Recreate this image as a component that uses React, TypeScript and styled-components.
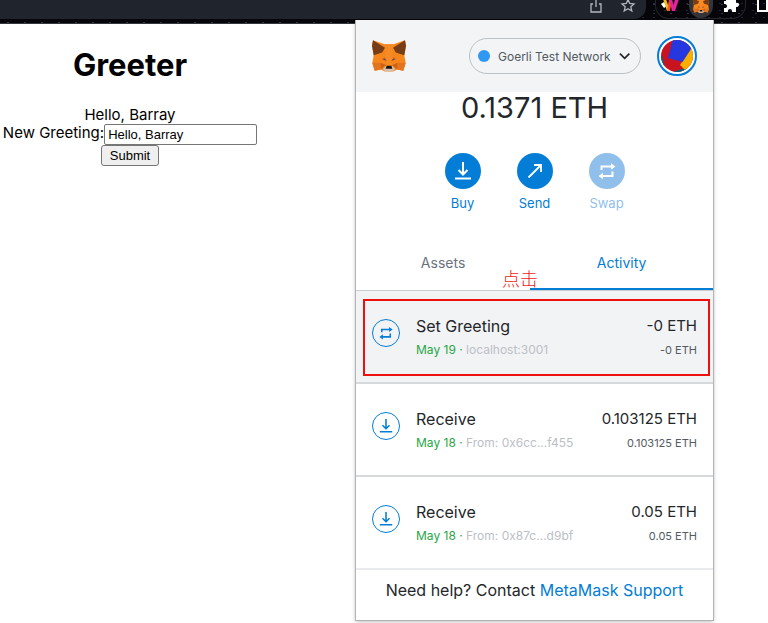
import React from "react";
import styled, { createGlobalStyle } from "styled-components";

const GlobalStyle = createGlobalStyle`
  *, *::before, *::after { box-sizing: border-box; }
  body {
    margin: 0;
    background: #fff;
    color: #000;
    font-family: Inter, "Liberation Sans", sans-serif;
  }
  button, input { font-family: inherit; margin: 0; }
`;

const blue = "#037dd6";

const Page = styled.div`
  position: relative;
  min-height: 100vh;
`;

const BrowserBar = styled.header`
  display: flex;
  height: 24px;
  overflow: hidden;
  background: #05050a;
  background-image: radial-gradient(#34344a 1px, transparent 1px), radial-gradient(#23233a 1px, transparent 1px);
  background-size: 17px 9px, 11px 7px;
  border-bottom: 1px solid #34363c;
`;

const AddressBar = styled.div`
  display: flex;
  flex: 1;
  justify-content: flex-end;
  gap: 16px;
  height: 19px;
  padding-right: 10px;
  background: #20242d;
  border-bottom-right-radius: 12px;
`;

const BarButton = styled.button`
  display: block;
  width: 16px;
  height: 16px;
  padding: 0;
  border: 0;
  background: none;
  color: #b4b7bd;
`;

const Extensions = styled.div`
  display: flex;
  align-items: flex-end;
  justify-content: space-between;
  width: 91px;
  height: 19px;
  margin: 0 11px 0 9px;
  padding: 0 2px;
  border: 1px solid #25252c;
  border-top: 0;
  border-radius: 0 0 14px 14px;
`;

const ExtensionButton = styled.button<{ $active?: boolean }>`
  display: flex;
  align-items: flex-end;
  justify-content: center;
  width: 24px;
  height: 18px;
  padding: 0 0 5px;
  border: 0;
  border-radius: 0 0 12px 12px;
  background: ${(p) => (p.$active ? "#333338" : "none")};
`;

const SidePanelMark = styled.span`
  width: 11px;
  height: 12px;
  border: 2px solid #fff;
  border-top: 0;
`;

const Greeter = styled.main`
  display: flex;
  flex-direction: column;
  align-items: center;
  width: 260px;
  padding-top: 22px;
  font-size: 15px;
  line-height: 18px;
`;

const Title = styled.h1`
  margin: 0 0 22px;
  font-size: 31px;
  line-height: 38px;
`;

const GreetingForm = styled.form`
  display: flex;
  flex-direction: column;
  align-items: center;
`;

const Field = styled.div`
  display: flex;
  height: 20px;
  white-space: nowrap;
`;

const GreetingInput = styled.input`
  width: 153px;
  height: 21px;
  padding: 0 3px;
  border: 1px solid #767676;
  border-radius: 2px;
  font-family: "Liberation Sans", Arial, sans-serif;
  font-size: 13px;
`;

const Submit = styled.button`
  width: 58px;
  height: 21px;
  margin-top: 1px;
  padding: 0;
  border: 1px solid #767676;
  border-radius: 3px;
  background: #efefef;
  font-family: "Liberation Sans", Arial, sans-serif;
  font-size: 13px;
`;

const Popup = styled.section`
  position: absolute;
  top: 20px;
  right: 55px;
  width: 357px;
  padding-bottom: 18px;
  background: #fff;
  color: #24272a;
  box-shadow: 0 0 0 1px #b4b4b4, 0 1px 4px rgba(0, 0, 0, 0.4);
  clip-path: inset(0 -8px -8px -8px);
`;

const PopupHeader = styled.div`
  display: flex;
  align-items: center;
  height: 72px;
  padding: 0 16px;
  background: #f2f4f6;
`;

const NetworkButton = styled.button`
  display: flex;
  align-items: center;
  gap: 8px;
  width: 172px;
  height: 36px;
  margin: 0 16px 0 auto;
  padding: 0 10px 0 8px;
  border: 1px solid #bbc0c5;
  border-radius: 18px;
  background: none;
  color: #535a61;
  font-size: 12px;
  white-space: nowrap;

  svg { margin-left: auto; }
`;

const Dot = styled.span`
  flex: none;
  width: 12px;
  height: 12px;
  border-radius: 50%;
  background: #3098f3;
`;

const AccountButton = styled.button`
  display: block;
  width: 40px;
  height: 40px;
  padding: 2px;
  border: 2px solid ${blue};
  border-radius: 50%;
  background: #fff;

  svg { display: block; border-radius: 50%; }
`;

const Balance = styled.div`
  margin: -4px 0 25px;
  font-size: 29px;
  line-height: 40px;
  text-align: center;
`;

const Actions = styled.div`
  display: flex;
  justify-content: center;
  gap: 24px;
`;

const Action = styled.button`
  display: flex;
  flex-direction: column;
  align-items: center;
  gap: 6px;
  width: 48px;
  padding: 0;
  border: 0;
  background: none;
  color: ${blue};
  font-size: 13px;
  line-height: 16px;

  &:disabled { color: #91bfec; }
`;

const ActionDisc = styled.span`
  display: flex;
  align-items: center;
  justify-content: center;
  width: 36px;
  height: 36px;
  border-radius: 50%;
  background: currentColor;

  svg { color: #fff; }
`;

const Tabs = styled.div`
  display: flex;
  height: 54px;
  margin-top: 26px;
  border-bottom: 1px solid #c9cdd1;
`;

const Tab = styled.button<{ $active?: boolean }>`
  flex: ${(p) => (p.$active ? 21 : 20)} 1 0;
  padding: 0;
  border: 0;
  border-bottom: 2px solid ${(p) => (p.$active ? blue : "transparent")};
  background: none;
  color: ${(p) => (p.$active ? blue : "#6a737d")};
  font-size: 14px;
`;

const ActivityList = styled.ul`
  margin: 0;
  padding: 0;
  list-style: none;
`;

const ActivityRow = styled.li<{ $selected?: boolean }>`
  position: relative;
  display: flex;
  gap: 16px;
  height: 93px;
  padding: 23px 16px 0;
  border-bottom: 2px solid #d6d9dc;
  background: ${(p) => (p.$selected ? "#f2f3f5" : "#fff")};

  &:last-child { border-color: #e8eaed; }
`;

const RowIcon = styled.span`
  display: flex;
  align-items: center;
  justify-content: center;
  width: 28px;
  height: 28px;
  margin-top: 5px;
  border: 1px solid ${blue};
  border-radius: 50%;
  color: ${blue};
`;

const RowText = styled.div`
  flex: 1;
  white-space: nowrap;
`;

const RowTitle = styled.div`
  font-size: 16px;
  line-height: 24px;
`;

const RowDetail = styled.div`
  font-size: 12px;
  line-height: 24px;
  color: #535a61;
`;

const AmountColumn = styled(RowText)`
  flex: none;
  text-align: right;

  ${RowTitle} { font-size: 15px; }
  ${RowDetail} { font-size: 11px; }
`;

const DateText = styled.span`
  color: #28a745;
`;

const Origin = styled.span`
  color: #bbc0c5;
`;

const Highlight = styled.div`
  position: absolute;
  inset: 8px 3px 6px 7px;
  border: 2px solid #ee1010;
  pointer-events: none;
`;

const ClickNote = styled.span`
  position: absolute;
  top: -26px;
  left: 146px;
  color: #ee1c1c;
  font-family: "Noto Sans CJK SC", sans-serif;
  font-weight: 300;
  font-size: 18px;
  line-height: 26px;
`;

const Help = styled.p`
  margin: 0;
  padding-top: 9px;
  font-size: 16px;
  line-height: 23px;
  text-align: center;
  white-space: nowrap;
`;

const HelpLink = styled.a`
  color: ${blue};
  text-decoration: none;
`;

const Fox = ({ width = 34, height = 32 }: { width?: number; height?: number }) => (
  <svg width={width} height={height} viewBox="0 0 100 93" aria-hidden="true">
    <path fill="#f6851b" d="M3 0 37 12H63L97 0l3 16-5 28 4 24-7 22-18-4-12 6H38l-12-6-18 4L1 68l4-24L0 16z" />
    <path fill="#763d16" d="M3 0 38 22 30 36 5 44 0 16zM97 0 62 22 70 36 95 44 100 16z" />
    <path fill="#f68a25" d="M38 12H62L60 48 56 76H44L40 48z" />
    <path fill="#e4751f" d="M1 66H25L26 86 8 90zM99 66H75L74 86 92 90z" />
    <path fill="#cd6116" d="M25 66 41 73 26 86zM75 66 59 73 74 86z" />
    <path fill="#d7c1b3" d="M32 85 41 76H59L68 85 60 92H40z" />
    <path fill="#c86528" d="M29 56 36 50 44 62zM71 56 64 50 56 62z" />
    <path fill="#5b4965" d="M33 57 38 54 41 60zM67 57 62 54 59 60z" />
    <path fill="#161616" d="M43 75H57L60 84H40z" />
  </svg>
);

const ShareIcon = () => (
  <svg width="16" height="16" viewBox="0 0 16 16" fill="none" stroke="currentColor" strokeWidth="1.3" aria-hidden="true">
    <path d="M5 4H3v8h10V4h-2M8 7V-2" />
  </svg>
);

const StarIcon = () => (
  <svg width="16" height="16" viewBox="0 0 16 16" fill="none" stroke="currentColor" strokeWidth="1.3" aria-hidden="true">
    <path d="M8-.5 9.7 3.5 14 3.9 10.8 6.8 11.8 11 8 8.7 4.2 11 5.2 6.8 2 3.9 6.3 3.5z" />
  </svg>
);

const WIcon = () => (
  <svg width="18" height="14" viewBox="0 0 18 14" aria-hidden="true">
    <path fill="#fff" d="M0 5l3-2 3 4-3 2z" />
    <path fill="#f7bd20" d="M2 0h3l4 12H6z" />
    <path fill="#f15a24" d="M8 0h3l-2 12H6z" />
    <path fill="#e3239a" d="M8 0h3l3 12h-3zM14 0h4l-4 12h-3z" />
  </svg>
);

const PuzzleIcon = () => (
  <svg width="16" height="14" viewBox="0 0 16 14" fill="#fff" aria-hidden="true">
    <path d="M3 0h10v4c4-1 4 4 0 4v5H9c1-4-5-4-4 0H1V9c4 1 4-5 0-4V2h2z" />
  </svg>
);

const DownloadIcon = ({ size = 18 }: { size?: number }) => (
  <svg width={size} height={size} viewBox="0 0 18 18" fill="none" stroke="currentColor" strokeWidth="2" aria-hidden="true">
    <path d="M9 0v12M4.5 8 9 12.5 13.5 8M1 16.5h16" />
  </svg>
);

const SendIcon = () => (
  <svg width="18" height="18" viewBox="0 0 18 18" fill="none" stroke="currentColor" strokeWidth="1.8" aria-hidden="true">
    <path d="M2.5 15.5 15 3M8 3h7v7" />
  </svg>
);

const SwapIcon = ({ size = 18 }: { size?: number }) => (
  <svg width={size} height={size} viewBox="0 0 18 18" fill="none" stroke="currentColor" strokeWidth="2" aria-hidden="true">
    <path d="M3.5 8V4.5H14M14.5 9.5V14H4" />
    <path fill="currentColor" stroke="none" d="M13 1.2 17.5 4.5 13 7.8zM5 10.7.5 14 5 17.3z" />
  </svg>
);

const Chevron = () => (
  <svg width="12" height="8" viewBox="0 0 12 8" fill="none" stroke="#24272a" strokeWidth="1.8" aria-hidden="true">
    <path d="M1 1.5 6 6.5l5-5" />
  </svg>
);

const Avatar = () => (
  <svg width="32" height="32" viewBox="0 0 32 32" aria-hidden="true">
    <path fill="#c81420" d="M0 0h32v32H0z" />
    <path fill="#03657c" d="M13 31.5 24 28l3 4H13zM0 16l1 0 3 11-4 2z" />
    <path fill="#faaf00" d="M31 6h1v18l-8 6-5-5z" />
    <path fill="#2538e0" d="M12-1h20v7L21.5 22 7 18z" />
  </svg>
);

const activity = [
  { title: "Set Greeting", date: "May 19", origin: "localhost:3001", amount: "-0 ETH", selected: true },
  { title: "Receive", date: "May 18", origin: "From: 0x6cc...f455", amount: "0.103125 ETH", selected: false },
  { title: "Receive", date: "May 18", origin: "From: 0x87c...d9bf", amount: "0.05 ETH", selected: false },
];

export default function App() {
  return (
    <Page>
      <GlobalStyle />
      <BrowserBar>
        <AddressBar>
          <BarButton aria-label="Share"><ShareIcon /></BarButton>
          <BarButton aria-label="Bookmark"><StarIcon /></BarButton>
        </AddressBar>
        <Extensions>
          <ExtensionButton aria-label="Wallet extension"><WIcon /></ExtensionButton>
          <ExtensionButton aria-label="MetaMask" $active><Fox width={16} height={15} /></ExtensionButton>
          <ExtensionButton aria-label="Extensions"><PuzzleIcon /></ExtensionButton>
        </Extensions>
        <SidePanelMark />
      </BrowserBar>

      <Greeter>
        <Title>Greeter</Title>
        <div>Hello, Barray</div>
        <GreetingForm onSubmit={(e) => e.preventDefault()}>
          <Field>
            <label htmlFor="greeting">New Greeting:</label>
            <GreetingInput id="greeting" defaultValue="Hello, Barray" />
          </Field>
          <Submit type="submit">Submit</Submit>
        </GreetingForm>
      </Greeter>

      <Popup>
        <PopupHeader>
          <Fox />
          <NetworkButton>
            <Dot />
            Goerli Test Network
            <Chevron />
          </NetworkButton>
          <AccountButton aria-label="Account"><Avatar /></AccountButton>
        </PopupHeader>
        <Balance>0.1371 ETH</Balance>
        <Actions>
          <Action><ActionDisc><DownloadIcon /></ActionDisc>Buy</Action>
          <Action><ActionDisc><SendIcon /></ActionDisc>Send</Action>
          <Action disabled><ActionDisc><SwapIcon /></ActionDisc>Swap</Action>
        </Actions>
        <Tabs role="tablist">
          <Tab role="tab" aria-selected={false}>Assets</Tab>
          <Tab role="tab" aria-selected $active>Activity</Tab>
        </Tabs>
        <ActivityList>
          {activity.map((item) => (
            <ActivityRow key={item.origin} $selected={item.selected}>
              <RowIcon>{item.selected ? <SwapIcon size={14} /> : <DownloadIcon size={14} />}</RowIcon>
              <RowText>
                <RowTitle>{item.title}</RowTitle>
                <RowDetail>
                  <DateText>{item.date} · </DateText>
                  <Origin>{item.origin}</Origin>
                </RowDetail>
              </RowText>
              <AmountColumn>
                <RowTitle>{item.amount}</RowTitle>
                <RowDetail>{item.amount}</RowDetail>
              </AmountColumn>
              {item.selected && <Highlight />}
              {item.selected && <ClickNote>点击</ClickNote>}
            </ActivityRow>
          ))}
        </ActivityList>
        <Help>
          Need help? Contact <HelpLink href="#support">MetaMask Support</HelpLink>
        </Help>
      </Popup>
    </Page>
  );
}
